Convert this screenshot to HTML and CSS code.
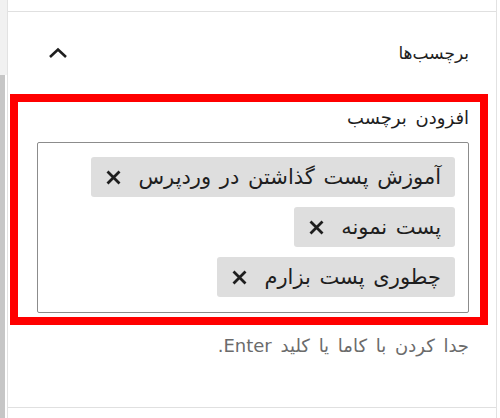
FILE: index.html
```html
<!DOCTYPE html>
<html lang="fa">

<head>
    <meta charset="utf-8">
    <link rel="stylesheet" href="styles.css">
</head>

<body>
    <div class="layout">
        <div class="scrollbar">
            <div class="scrollbar-track"></div>
            <div class="scrollbar-thumb"></div>
        </div>
        <div class="sidebar">
            <div class="prev-panel"></div>
            <div class="panel">
                <div class="panel-header">
                    <span class="panel-title">برچسب‌ها</span>
                    <button class="panel-toggle" aria-label="بستن">
                        <svg width="20" height="12" viewBox="0 0 20 12">
                            <polyline points="2,10 10,2.5 18,10" fill="none" stroke="#1e1e1e" stroke-width="2.6" />
                        </svg>
                    </button>
                </div>
                <div class="highlight">
                    <label class="field-label" for="tag-input">افزودن برچسب</label>
                    <div class="token-field">
                        <span class="token">
                            <span class="token-text">آموزش پست گذاشتن در وردپرس</span>
                            <span class="token-remove">
                                <svg width="15" height="15" viewBox="0 0 15 15">
                                    <path d="M1.5 1.5 L13.5 13.5 M13.5 1.5 L1.5 13.5" stroke="#1e1e1e" stroke-width="2.8" />
                                </svg>
                            </span>
                        </span>
                        <span class="token">
                            <span class="token-text">پست نمونه</span>
                            <span class="token-remove">
                                <svg width="15" height="15" viewBox="0 0 15 15">
                                    <path d="M1.5 1.5 L13.5 13.5 M13.5 1.5 L1.5 13.5" stroke="#1e1e1e" stroke-width="2.8" />
                                </svg>
                            </span>
                        </span>
                        <span class="token">
                            <span class="token-text">چطوری پست بزارم</span>
                            <span class="token-remove">
                                <svg width="15" height="15" viewBox="0 0 15 15">
                                    <path d="M1.5 1.5 L13.5 13.5 M13.5 1.5 L1.5 13.5" stroke="#1e1e1e" stroke-width="2.8" />
                                </svg>
                            </span>
                        </span>
                    </div>
                </div>
                <p class="help">جدا کردن با کاما یا کلید Enter.</p>
            </div>
        </div>
    </div>
</body>

</html>
```

FILE: styles.css
```css
body {
    margin: 0;
    padding: 0;
    background: #fff;
    font-family: "DejaVu Sans", "Noto Sans", sans-serif;
    color: #1e1e1e;
}

.layout {
    display: flex;
    height: 418px;
    overflow: hidden;
}

.scrollbar {
    width: 7px;
    display: flex;
    flex-direction: column;
}

.scrollbar-track {
    height: 75px;
    background: #f1f1f1;
}

.scrollbar-thumb {
    flex-grow: 1;
    width: 5px;
    background: #c6c6c6;
}

.sidebar {
    width: 488px;
    border-left: 1px solid #e2e2e2;
    border-right: 1px solid #e2e2e2;
}

.prev-panel {
    height: 11px;
    border-bottom: 1px solid #e0e0e0;
}

.panel {
    direction: rtl;
    height: 396px;
    border-bottom: 1px solid #e0e0e0;
    box-sizing: border-box;
}

.panel-header {
    display: flex;
    justify-content: space-between;
    align-items: center;
    height: 82px;
    padding: 0 27px 0 40px;
}

.panel-title {
    font-size: 17px;
    color: #1e1e1e;
}

.panel-toggle {
    background: none;
    border: none;
    padding: 0;
    width: 20px;
    height: 12px;
    display: flex;
}

.highlight {
    margin: 0 8px 0 2px;
    border: 8px solid #ff0000;
    padding: 6px 11px 4px 19px;
}

.field-label {
    display: block;
    font-size: 18px;
    word-spacing: 3px;
    line-height: 20px;
    margin-bottom: 14px;
    color: #1e1e1e;
}

.token-field {
    border: 1px solid #8c8c8c;
    border-radius: 2px;
    padding: 14px 13px 15px;
    display: flex;
    flex-direction: column;
    align-items: flex-start;
    gap: 10px;
}

.token {
    display: flex;
    align-items: center;
    gap: 17px;
    height: 40px;
    padding: 0 14px 0 15px;
    background: #dedede;
    border-radius: 3px;
}

.token-text {
    font-size: 21px;
    word-spacing: 2px;
    color: #1e1e1e;
}

.token-remove {
    display: flex;
}

.help {
    margin: 10px 27px 0 0;
    font-size: 18px;
    word-spacing: 3px;
    color: #6b6b6b;
}
```
